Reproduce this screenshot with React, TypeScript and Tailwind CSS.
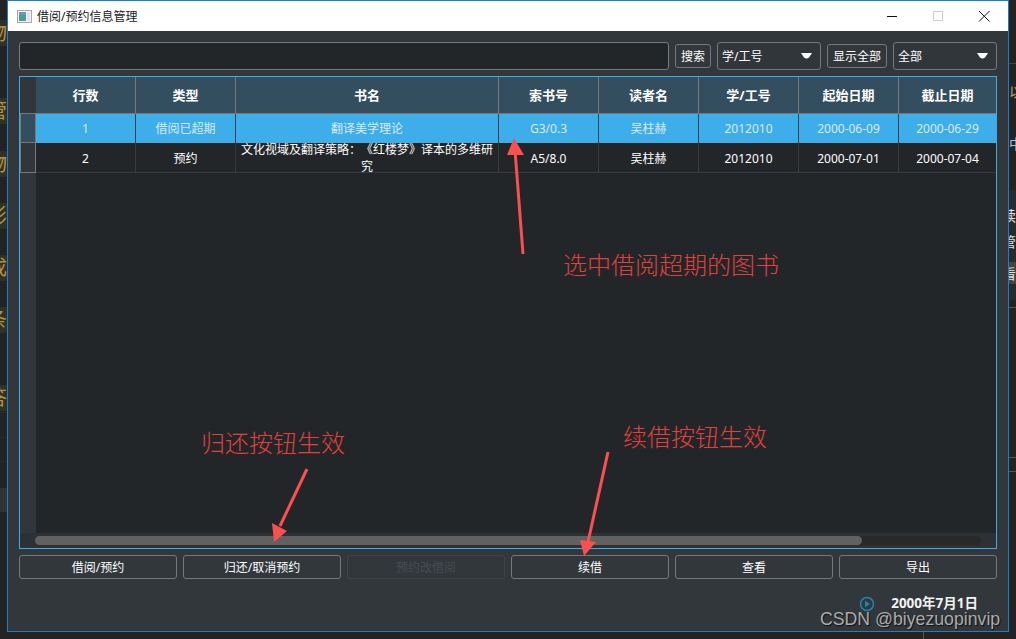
import React from 'react';

const COLS = 'grid grid-cols-[100px_100px_263px_100px_100px_100px_100px_97px]';

const headers = ['行数', '类型', '书名', '索书号', '读者名', '学/工号', '起始日期', '截止日期'];

const rows = [
  ['1', '借阅已超期', '翻译美学理论', 'G3/0.3', '吴柱赫', '2012010', '2000-06-09', '2000-06-29'],
  ['2', '预约', '文化视域及翻译策略：《红楼梦》译本的多维研究', 'A5/8.0', '吴柱赫', '2012010', '2000-07-01', '2000-07-04'],
];

const actions = ['借阅/预约', '归还/取消预约', '预约改借阅', '续借', '查看', '导出'];

// bits of the window behind, only a few pixels of them show
const leftGlyphs = [
  { top: 'top-[20px]', ch: '物' },
  { top: 'top-[98px]', ch: '管' },
  { top: 'top-[151px]', ch: '物' },
  { top: 'top-[203px]', ch: '影' },
  { top: 'top-[255px]', ch: '成' },
  { top: 'top-[307px]', ch: '条' },
  { top: 'top-[385px]', ch: '答' },
];

const ComboBox = ({ label }: { label: string }) => (
  <div className="flex h-[28px] w-[104px] items-center justify-between rounded-[3px] border border-[#76797c] bg-[#31363b] pl-[4px] pr-[8px] text-white">
    <span>{label}</span>
    <svg width="11" height="6" viewBox="0 0 11 6">
      <path d="M0 0H11L8 4.5Q5.5 6.5 3 4.5Z" fill="#ffffff" />
    </svg>
  </div>
);

const App = () => {
  return (
    <div className="relative h-[639px] w-[1016px] overflow-hidden bg-[#232323] font-['Noto_Sans','Noto_Sans_CJK_SC',sans-serif] text-[12px] leading-[17px] [text-spacing-trim:space-all]">
      {/* desktop behind the window */}
      {leftGlyphs.map((g, i) => (
        <div key={i} className={`absolute left-0 ${g.top} flex h-[26px] w-[7px] justify-end overflow-hidden bg-[#2e3328] text-[20px] leading-[26px] text-[#b8903f]`}>
          <span className="shrink-0">{g.ch}</span>
        </div>
      ))}
      <div className="absolute left-0 top-[412px] h-px w-[7px] bg-[#2c2c2c]" />
      <div className="absolute left-0 top-[437px] h-px w-[7px] bg-[#2c2c2c]" />
      <div className="absolute left-0 top-[461px] h-px w-[7px] bg-[#2c2c2c]" />
      <div className="absolute left-0 top-[488px] h-[24px] w-[7px] bg-[#333333]" />
      <div className="absolute left-[1009px] top-[63px] h-px w-[7px] bg-[#444444]" />
      <div className="absolute left-[1009px] top-[83px] w-[7px] overflow-hidden text-[14px] text-[#b9a06a]">
        <span className="block w-[14px]">以</span>
      </div>
      <div className="absolute left-[1009px] top-[135px] w-[7px] overflow-hidden text-[14px] text-[#b9c0c8]">
        <span className="block w-[14px]">中</span>
      </div>
      <div className="absolute left-[1009px] top-[190px] h-[110px] w-[7px] bg-[#282b2e]" />
      <div className="absolute left-[1009px] top-[207px] flex w-[7px] overflow-hidden text-[14px] text-[#e0e0e0]">
        <span className="-ml-[7px] block w-[14px] shrink-0">续</span>
      </div>
      <div className="absolute left-[1009px] top-[233px] flex w-[7px] overflow-hidden text-[14px] text-[#e0e0e0]">
        <span className="-ml-[7px] block w-[14px] shrink-0">管</span>
      </div>
      <div className="absolute left-[1009px] top-[262px] flex h-[22px] w-[7px] items-center overflow-hidden bg-[#444444] text-[14px] text-[#e0e0e0]">
        <span className="-ml-[7px] block w-[14px] shrink-0">看</span>
      </div>
      <div className="absolute left-[1009px] top-[307px] h-px w-[7px] bg-[#555555]" />
      <div className="absolute left-[1009px] top-[457px] h-px w-[7px] bg-[#555555]" />
      <div className="absolute left-[1009px] top-[471px] h-px w-[7px] bg-[#555555]" />
      <div className="absolute left-[923px] top-[632px] h-[7px] w-px bg-[#555555]" />

      {/* the dialog */}
      <div className="absolute left-[7px] top-0 flex h-[632px] w-[1002px] flex-col border border-[#1a7fd0] bg-[#32373c]">
        <div className="flex h-[30px] shrink-0 items-center bg-white pl-[9px] text-[#1a1a1a]">
          <svg width="15" height="13" viewBox="0 0 15 13" className="mr-[5px] shrink-0">
            <rect x="0.5" y="0.5" width="14" height="12" fill="#f4f4f4" stroke="#a8a8a8" />
            <rect x="2" y="2" width="7" height="9" fill="#4f9a94" />
            <rect x="2" y="2" width="7" height="3" fill="#6f93c4" />
            <rect x="10" y="2" width="3" height="9" fill="#dfe6ea" />
          </svg>
          <span>借阅/预约信息管理</span>
          <div className="ml-auto flex h-full items-center">
            <svg width="46" height="30" viewBox="0 0 46 30">
              <path d="M18 15.5H28" stroke="#111111" strokeWidth="1" />
            </svg>
            <svg width="46" height="30" viewBox="0 0 46 30">
              <rect x="18.5" y="10.5" width="9" height="9" fill="none" stroke="#cfcfcf" />
            </svg>
            <svg width="46" height="30" viewBox="0 0 46 30" className="mr-[1px]">
              <path d="M18 10L28.5 20.5M28.5 10L18 20.5" stroke="#111111" strokeWidth="1" />
            </svg>
          </div>
        </div>

        <div className="flex min-h-0 flex-1 flex-col px-[11px] pt-[11px]">
          {/* search row */}
          <div className="flex h-[28px] shrink-0 items-center">
            <div className="h-[28px] w-[650px] rounded-[3px] border border-[#76797c] bg-[#232629]" />
            <div className="ml-[6px] flex h-[24px] w-[36px] items-center justify-center rounded-[3px] border border-[#76797c] text-white">搜索</div>
            <div className="ml-[6px]">
              <ComboBox label="学/工号" />
            </div>
            <div className="ml-[6px] flex h-[24px] w-[60px] items-center justify-center rounded-[3px] border border-[#76797c] text-white">显示全部</div>
            <div className="ml-[6px]">
              <ComboBox label="全部" />
            </div>
          </div>

          {/* table */}
          <div className="mt-[6px] flex h-[473px] shrink-0 flex-col border border-[#3daee9] bg-[#232629] text-white">
            <div className="flex min-h-0 flex-1">
              <div className="flex w-[16px] shrink-0 flex-col bg-[#31363b]">
                <div className="h-[37px] border-b border-[#76797c]" />
                <div className="h-[29px] border-x border-b border-[#76797c] bg-[#334e5e]" />
                <div className="h-[30px] border border-t-0 border-[#76797c]" />
              </div>
              <div className="min-w-0 flex-1">
                <div className={`${COLS} h-[37px] border-b border-[#76797c] bg-[#334e5e] text-[13px] font-bold`}>
                  {headers.map((h) => (
                    <div key={h} className="flex items-center justify-center border-r border-[#76797c] last:border-r-0">
                      {h}
                    </div>
                  ))}
                </div>
                <div className={`${COLS} h-[29px] grid-rows-[29px] bg-[#3daee9] text-[#dbe9f2]`}>
                  {rows[0].map((c, i) => (
                    <div key={i} className="flex items-center justify-center border-r border-[#3a4046] text-center last:border-r-0">
                      {c}
                    </div>
                  ))}
                </div>
                <div className={`${COLS} h-[30px] grid-rows-[29px] border-b border-[#383c41]`}>
                  {rows[1].map((c, i) => (
                    <div
                      key={i}
                      className={
                        i === 2
                          ? 'flex min-h-0 items-center justify-center border-r border-[#383c41] px-[4px] text-center'
                          : 'flex min-h-0 items-center justify-center border-r border-[#383c41] px-[4px] pt-[2px] text-center last:border-r-0'
                      }
                    >
                      {c}
                    </div>
                  ))}
                </div>
              </div>
            </div>
            {/* horizontal scroll bar */}
            <div className="flex h-[15px] shrink-0 bg-[#2c3136] pl-[15px] pt-[3px]">
              <div className="h-[9px] w-[946px] rounded-full bg-[#292929]">
                <div className="h-[9px] w-[827px] rounded-full bg-[#616161]" />
              </div>
            </div>
          </div>

          {/* action buttons */}
          <div className="mt-[6px] grid shrink-0 grid-cols-6 gap-[6px]">
            {actions.map((a) => (
              <div
                key={a}
                className={
                  a === '预约改借阅'
                    ? 'flex h-[24px] items-center justify-center rounded-[3px] border border-[#3f4449] text-[#474c51]'
                    : 'flex h-[24px] items-center justify-center rounded-[3px] border border-[#76797c] text-white'
                }
              >
                {a}
              </div>
            ))}
          </div>

          {/* status */}
          <div className="mt-[16px] flex items-center justify-end pr-[19px] text-[13.5px] font-bold text-[#f2f2f2]">
            <svg width="16" height="16" viewBox="0 0 16 16" className="mr-[16px] shrink-0">
              <circle cx="8" cy="8" r="6.5" fill="none" stroke="#1f86ad" strokeWidth="1.5" />
              <path d="M6 4.8L11 8L6 11.2Z" fill="#1f86ad" />
            </svg>
            <span>2000年7月1日</span>
          </div>
        </div>
      </div>

      {/* annotations drawn on top of the screenshot */}
      <svg width="1016" height="639" viewBox="0 0 1016 639" className="pointer-events-none absolute left-0 top-0">
        <path d="M523 254L515 150" stroke="#fb5050" strokeWidth="3" />
        <path d="M514 138L507 155L524 155Z" fill="#fb5050" />
        <path d="M307 469L280 526" stroke="#fb5050" strokeWidth="3" />
        <path d="M274 542L272 523L287 531Z" fill="#fb5050" />
        <path d="M608 452L588 542" stroke="#fb5050" strokeWidth="3" />
        <path d="M584 556L580 540L596 542Z" fill="#fb5050" />
      </svg>
      <div className="absolute left-[563px] top-[249px] text-[24px] font-light leading-[32px] text-[#e0413d]">选中借阅超期的图书</div>
      <div className="absolute left-[201px] top-[427px] text-[24px] font-light leading-[32px] text-[#e0413d]">归还按钮生效</div>
      <div className="absolute left-[623px] top-[421px] text-[24px] font-light leading-[32px] text-[#e0413d]">续借按钮生效</div>
      <div className="absolute left-[820px] top-[608px] font-['Liberation_Sans',sans-serif] text-[17.7px] leading-[22px] text-[#ababab] [text-shadow:1px_1px_1px_#111111]">
        CSDN @biyezuopinvip
      </div>
    </div>
  );
};

export default App;
